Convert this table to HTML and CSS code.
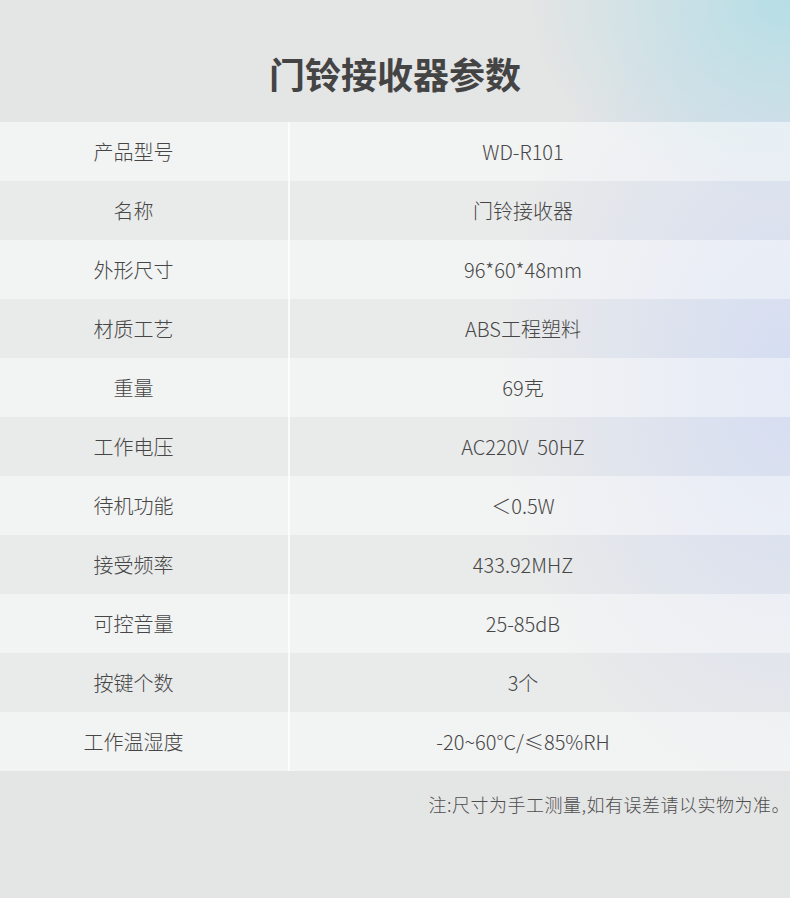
FILE: index.html
```html
<!DOCTYPE html>
<html lang="zh-CN">
<head>
<meta charset="utf-8">
<title>门铃接收器参数</title>
<link rel="stylesheet" href="styles.css">
</head>
<body>
<div class="page">
  <header class="head">
    <h1 class="title">门铃接收器参数</h1>
  </header>
  <div class="table">
    <div class="row light"><div class="key">产品型号</div><div class="val">WD-R101</div></div>
    <div class="row dark"><div class="key">名称</div><div class="val">门铃接收器</div></div>
    <div class="row light"><div class="key">外形尺寸</div><div class="val">96*60*48mm</div></div>
    <div class="row dark"><div class="key">材质工艺</div><div class="val">ABS工程塑料</div></div>
    <div class="row light"><div class="key">重量</div><div class="val">69克</div></div>
    <div class="row dark"><div class="key">工作电压</div><div class="val">AC220V&nbsp; 50HZ</div></div>
    <div class="row light"><div class="key">待机功能</div><div class="val">＜0.5W</div></div>
    <div class="row dark"><div class="key">接受频率</div><div class="val">433.92MHZ</div></div>
    <div class="row light"><div class="key">可控音量</div><div class="val">25-85dB</div></div>
    <div class="row dark"><div class="key">按键个数</div><div class="val">3个</div></div>
    <div class="row light"><div class="key">工作温湿度</div><div class="val">-20~60°C/≤85%RH</div></div>
  </div>
  <p class="note">注:尺寸为手工测量,如有误差请以实物为准。</p>
</div>
</body>
</html>
```
FILE: styles.css
```css
html, body {
  margin: 0;
  padding: 0;
}
body {
  width: 790px;
  height: 898px;
  overflow: hidden;
  font-family: "Noto Sans CJK SC", "Noto Sans", sans-serif;
  color: #464646;
}
.page {
  height: 898px;
  background:
    radial-gradient(ellipse 260px 200px at 100% 0%, rgba(182, 222, 230, 1), rgba(182, 222, 230, 0) 100%),
    radial-gradient(ellipse 290px 420px at 100% 42%, rgba(202, 213, 240, 0.95), rgba(202, 213, 240, 0) 100%),
    #e4e5e5;
}
.head {
  height: 122px;
  box-sizing: border-box;
  padding-top: 55px;
}
.title {
  margin: 0;
  font-size: 36px;
  line-height: 36px;
  font-weight: 700;
  color: #444;
  text-align: center;
}
.table {
  display: flex;
  flex-direction: column;
}
.row {
  display: flex;
  height: 59px;
  align-items: stretch;
  font-size: 20px;
  font-weight: 300;
}
.row.light {
  background: rgba(255, 255, 255, 0.52);
}
.row.dark {
  background: rgba(255, 255, 255, 0.19);
}
.key {
  width: 290px;
  flex: none;
  box-sizing: border-box;
  padding: 0 21px 0 0;
  border-right: 2px solid rgba(255, 255, 255, 0.75);
  display: flex;
  align-items: center;
  justify-content: center;
}
.val {
  flex: 1;
  padding-right: 34px;
  display: flex;
  align-items: center;
  justify-content: center;
}
.note {
  margin: 0;
  padding: 21px 0 0 0;
  font-size: 18px;
  line-height: 24px;
  letter-spacing: 0.5px;
  font-weight: 300;
  text-align: right;
  color: #4e4e4e;
}
```
